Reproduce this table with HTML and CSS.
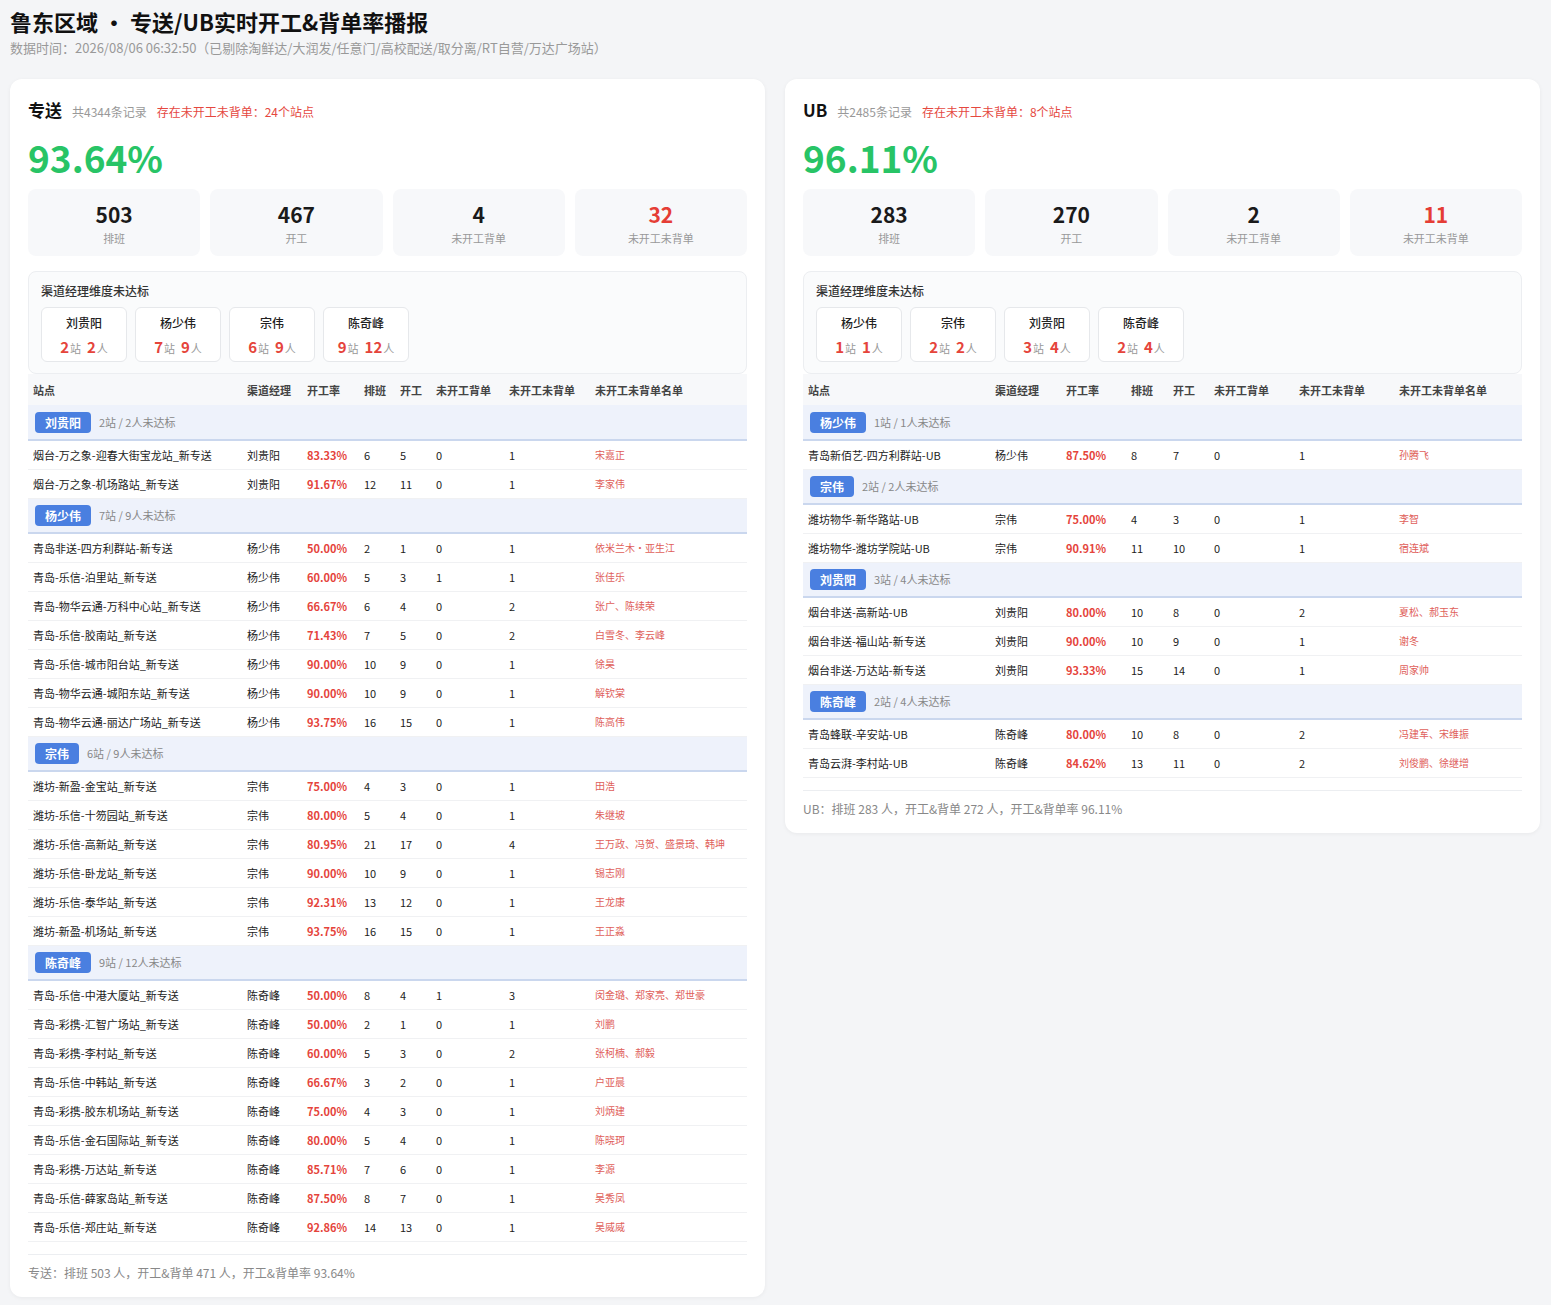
FILE: index.html
```html
<!DOCTYPE html>
<html lang="zh-CN">
<head>
<meta charset="utf-8">
<title>鲁东区域 · 专送/UB实时开工&amp;背单率播报</title>
<link rel="stylesheet" href="styles.css">
</head>
<body>
<header class="page-head">
  <h1 class="page-title">鲁东区域 · 专送/UB实时开工&amp;背单率播报</h1>
  <div class="page-sub">数据时间：2026/08/06 06:32:50（已剔除淘鲜达/大润发/任意门/高校配送/取分离/RT自营/万达广场站）</div>
</header>

<main class="cards">
  <section class="card">
    <div class="card-head">
      <span class="card-name">专送</span>
      <span class="card-count">共4344条记录</span>
      <span class="card-warn">存在未开工未背单：24个站点</span>
    </div>
    <div class="big-rate">93.64%</div>
    <div class="stats">
      <div class="stat"><div class="stat-num">503</div><div class="stat-label">排班</div></div>
      <div class="stat"><div class="stat-num">467</div><div class="stat-label">开工</div></div>
      <div class="stat"><div class="stat-num">4</div><div class="stat-label">未开工背单</div></div>
      <div class="stat"><div class="stat-num red">32</div><div class="stat-label">未开工未背单</div></div>
    </div>
    <div class="mgr-box">
      <div class="mgr-title">渠道经理维度未达标</div>
      <div class="chips">
        <div class="chip"><div class="chip-name">刘贵阳</div><div class="chip-stat"><b>2</b><i>站</i><b>2</b><i>人</i></div></div>
        <div class="chip"><div class="chip-name">杨少伟</div><div class="chip-stat"><b>7</b><i>站</i><b>9</b><i>人</i></div></div>
        <div class="chip"><div class="chip-name">宗伟</div><div class="chip-stat"><b>6</b><i>站</i><b>9</b><i>人</i></div></div>
        <div class="chip"><div class="chip-name">陈奇峰</div><div class="chip-stat"><b>9</b><i>站</i><b>12</b><i>人</i></div></div>
      </div>
    </div>
    <table class="tbl tbl-zs">
      <colgroup><col class="c1"><col class="c2"><col class="c3"><col class="c4"><col class="c5"><col class="c6"><col class="c7"><col></colgroup>
      <thead>
        <tr><th>站点</th><th>渠道经理</th><th>开工率</th><th>排班</th><th>开工</th><th>未开工背单</th><th>未开工未背单</th><th>未开工未背单名单</th></tr>
      </thead>
      <tbody>
        <tr class="grp"><td colspan="8"><span class="badge">刘贵阳</span><span class="grp-info">2站 / 2人未达标</span></td></tr>
        <tr><td>烟台-万之象-迎春大街宝龙站_新专送</td><td>刘贵阳</td><td class="rate">83.33%</td><td>6</td><td>5</td><td>0</td><td>1</td><td class="names">宋嘉正</td></tr>
        <tr><td>烟台-万之象-机场路站_新专送</td><td>刘贵阳</td><td class="rate">91.67%</td><td>12</td><td>11</td><td>0</td><td>1</td><td class="names">李家伟</td></tr>

        <tr class="grp"><td colspan="8"><span class="badge">杨少伟</span><span class="grp-info">7站 / 9人未达标</span></td></tr>
        <tr><td>青岛非送-四方利群站-新专送</td><td>杨少伟</td><td class="rate">50.00%</td><td>2</td><td>1</td><td>0</td><td>1</td><td class="names">依米兰木・亚生江</td></tr>
        <tr><td>青岛-乐信-泊里站_新专送</td><td>杨少伟</td><td class="rate">60.00%</td><td>5</td><td>3</td><td>1</td><td>1</td><td class="names">张佳乐</td></tr>
        <tr><td>青岛-物华云通-万科中心站_新专送</td><td>杨少伟</td><td class="rate">66.67%</td><td>6</td><td>4</td><td>0</td><td>2</td><td class="names">张广、陈续荣</td></tr>
        <tr><td>青岛-乐信-胶南站_新专送</td><td>杨少伟</td><td class="rate">71.43%</td><td>7</td><td>5</td><td>0</td><td>2</td><td class="names">白雪冬、李云峰</td></tr>
        <tr><td>青岛-乐信-城市阳台站_新专送</td><td>杨少伟</td><td class="rate">90.00%</td><td>10</td><td>9</td><td>0</td><td>1</td><td class="names">徐昊</td></tr>
        <tr><td>青岛-物华云通-城阳东站_新专送</td><td>杨少伟</td><td class="rate">90.00%</td><td>10</td><td>9</td><td>0</td><td>1</td><td class="names">解钦棠</td></tr>
        <tr><td>青岛-物华云通-丽达广场站_新专送</td><td>杨少伟</td><td class="rate">93.75%</td><td>16</td><td>15</td><td>0</td><td>1</td><td class="names">陈高伟</td></tr>

        <tr class="grp"><td colspan="8"><span class="badge">宗伟</span><span class="grp-info">6站 / 9人未达标</span></td></tr>
        <tr><td>潍坊-新盈-金宝站_新专送</td><td>宗伟</td><td class="rate">75.00%</td><td>4</td><td>3</td><td>0</td><td>1</td><td class="names">田浩</td></tr>
        <tr><td>潍坊-乐信-十笏园站_新专送</td><td>宗伟</td><td class="rate">80.00%</td><td>5</td><td>4</td><td>0</td><td>1</td><td class="names">朱继坡</td></tr>
        <tr><td>潍坊-乐信-高新站_新专送</td><td>宗伟</td><td class="rate">80.95%</td><td>21</td><td>17</td><td>0</td><td>4</td><td class="names">王万政、冯贺、盛景琦、韩坤</td></tr>
        <tr><td>潍坊-乐信-卧龙站_新专送</td><td>宗伟</td><td class="rate">90.00%</td><td>10</td><td>9</td><td>0</td><td>1</td><td class="names">锡志刚</td></tr>
        <tr><td>潍坊-乐信-泰华站_新专送</td><td>宗伟</td><td class="rate">92.31%</td><td>13</td><td>12</td><td>0</td><td>1</td><td class="names">王龙康</td></tr>
        <tr><td>潍坊-新盈-机场站_新专送</td><td>宗伟</td><td class="rate">93.75%</td><td>16</td><td>15</td><td>0</td><td>1</td><td class="names">王正淼</td></tr>

        <tr class="grp"><td colspan="8"><span class="badge">陈奇峰</span><span class="grp-info">9站 / 12人未达标</span></td></tr>
        <tr><td>青岛-乐信-中港大厦站_新专送</td><td>陈奇峰</td><td class="rate">50.00%</td><td>8</td><td>4</td><td>1</td><td>3</td><td class="names">闵金璐、郑家亮、郑世豪</td></tr>
        <tr><td>青岛-彩携-汇智广场站_新专送</td><td>陈奇峰</td><td class="rate">50.00%</td><td>2</td><td>1</td><td>0</td><td>1</td><td class="names">刘鹏</td></tr>
        <tr><td>青岛-彩携-李村站_新专送</td><td>陈奇峰</td><td class="rate">60.00%</td><td>5</td><td>3</td><td>0</td><td>2</td><td class="names">张柯楠、郝毅</td></tr>
        <tr><td>青岛-乐信-中韩站_新专送</td><td>陈奇峰</td><td class="rate">66.67%</td><td>3</td><td>2</td><td>0</td><td>1</td><td class="names">户亚晨</td></tr>
        <tr><td>青岛-彩携-胶东机场站_新专送</td><td>陈奇峰</td><td class="rate">75.00%</td><td>4</td><td>3</td><td>0</td><td>1</td><td class="names">刘炳建</td></tr>
        <tr><td>青岛-乐信-金石国际站_新专送</td><td>陈奇峰</td><td class="rate">80.00%</td><td>5</td><td>4</td><td>0</td><td>1</td><td class="names">陈晓珂</td></tr>
        <tr><td>青岛-彩携-万达站_新专送</td><td>陈奇峰</td><td class="rate">85.71%</td><td>7</td><td>6</td><td>0</td><td>1</td><td class="names">李源</td></tr>
        <tr><td>青岛-乐信-薛家岛站_新专送</td><td>陈奇峰</td><td class="rate">87.50%</td><td>8</td><td>7</td><td>0</td><td>1</td><td class="names">吴秀凤</td></tr>
        <tr><td>青岛-乐信-郑庄站_新专送</td><td>陈奇峰</td><td class="rate">92.86%</td><td>14</td><td>13</td><td>0</td><td>1</td><td class="names">吴威威</td></tr>
      </tbody>
    </table>
    <div class="card-foot">专送：排班 503 人，开工&amp;背单 471 人，开工&amp;背单率 93.64%</div>
  </section>

  <section class="card">
    <div class="card-head">
      <span class="card-name">UB</span>
      <span class="card-count">共2485条记录</span>
      <span class="card-warn">存在未开工未背单：8个站点</span>
    </div>
    <div class="big-rate">96.11%</div>
    <div class="stats">
      <div class="stat"><div class="stat-num">283</div><div class="stat-label">排班</div></div>
      <div class="stat"><div class="stat-num">270</div><div class="stat-label">开工</div></div>
      <div class="stat"><div class="stat-num">2</div><div class="stat-label">未开工背单</div></div>
      <div class="stat"><div class="stat-num red">11</div><div class="stat-label">未开工未背单</div></div>
    </div>
    <div class="mgr-box">
      <div class="mgr-title">渠道经理维度未达标</div>
      <div class="chips">
        <div class="chip"><div class="chip-name">杨少伟</div><div class="chip-stat"><b>1</b><i>站</i><b>1</b><i>人</i></div></div>
        <div class="chip"><div class="chip-name">宗伟</div><div class="chip-stat"><b>2</b><i>站</i><b>2</b><i>人</i></div></div>
        <div class="chip"><div class="chip-name">刘贵阳</div><div class="chip-stat"><b>3</b><i>站</i><b>4</b><i>人</i></div></div>
        <div class="chip"><div class="chip-name">陈奇峰</div><div class="chip-stat"><b>2</b><i>站</i><b>4</b><i>人</i></div></div>
      </div>
    </div>
    <table class="tbl tbl-ub">
      <colgroup><col class="c1"><col class="c2"><col class="c3"><col class="c4"><col class="c5"><col class="c6"><col class="c7"><col></colgroup>
      <thead>
        <tr><th>站点</th><th>渠道经理</th><th>开工率</th><th>排班</th><th>开工</th><th>未开工背单</th><th>未开工未背单</th><th>未开工未背单名单</th></tr>
      </thead>
      <tbody>
        <tr class="grp"><td colspan="8"><span class="badge">杨少伟</span><span class="grp-info">1站 / 1人未达标</span></td></tr>
        <tr><td>青岛新佰艺-四方利群站-UB</td><td>杨少伟</td><td class="rate">87.50%</td><td>8</td><td>7</td><td>0</td><td>1</td><td class="names">孙腾飞</td></tr>

        <tr class="grp"><td colspan="8"><span class="badge">宗伟</span><span class="grp-info">2站 / 2人未达标</span></td></tr>
        <tr><td>潍坊物华-新华路站-UB</td><td>宗伟</td><td class="rate">75.00%</td><td>4</td><td>3</td><td>0</td><td>1</td><td class="names">李智</td></tr>
        <tr><td>潍坊物华-潍坊学院站-UB</td><td>宗伟</td><td class="rate">90.91%</td><td>11</td><td>10</td><td>0</td><td>1</td><td class="names">宿连斌</td></tr>

        <tr class="grp"><td colspan="8"><span class="badge">刘贵阳</span><span class="grp-info">3站 / 4人未达标</span></td></tr>
        <tr><td>烟台非送-高新站-UB</td><td>刘贵阳</td><td class="rate">80.00%</td><td>10</td><td>8</td><td>0</td><td>2</td><td class="names">夏松、郝玉东</td></tr>
        <tr><td>烟台非送-福山站-新专送</td><td>刘贵阳</td><td class="rate">90.00%</td><td>10</td><td>9</td><td>0</td><td>1</td><td class="names">谢冬</td></tr>
        <tr><td>烟台非送-万达站-新专送</td><td>刘贵阳</td><td class="rate">93.33%</td><td>15</td><td>14</td><td>0</td><td>1</td><td class="names">周家帅</td></tr>

        <tr class="grp"><td colspan="8"><span class="badge">陈奇峰</span><span class="grp-info">2站 / 4人未达标</span></td></tr>
        <tr><td>青岛蜂联-辛安站-UB</td><td>陈奇峰</td><td class="rate">80.00%</td><td>10</td><td>8</td><td>0</td><td>2</td><td class="names">冯建军、宋维振</td></tr>
        <tr><td>青岛云湃-李村站-UB</td><td>陈奇峰</td><td class="rate">84.62%</td><td>13</td><td>11</td><td>0</td><td>2</td><td class="names">刘俊鹏、徐继增</td></tr>
      </tbody>
    </table>
    <div class="card-foot">UB：排班 283 人，开工&amp;背单 272 人，开工&amp;背单率 96.11%</div>
  </section>
</main>
</body>
</html>
```

FILE: styles.css
```css
* { box-sizing: border-box; }

body {
  margin: 0;
  padding: 6px 11px 10px 10px;
  background: #f4f5f7;
  font-family: "Noto Sans CJK SC", "Noto Sans", sans-serif;
  color: #222;
}

.page-title {
  margin: 0;
  font-size: 22px;
  line-height: 30px;
  font-weight: 700;
  color: #111;
}

.page-sub {
  margin-top: 3px;
  font-size: 13px;
  line-height: 18px;
  color: #999;
}

.cards {
  display: grid;
  grid-template-columns: 1fr 1fr;
  gap: 20px;
  align-items: start;
  margin-top: 22px;
}

.card {
  background: #fff;
  border-radius: 12px;
  padding: 18px 18px 15px;
  box-shadow: 0 1px 4px rgba(0, 0, 0, 0.05);
}

.card-head {
  display: flex;
  align-items: baseline;
  gap: 10px;
  line-height: 26px;
}

.card-name {
  font-size: 17px;
  font-weight: 700;
  color: #111;
}

.card-count {
  font-size: 12px;
  color: #999;
}

.card-warn {
  font-size: 12px;
  color: #e5483f;
}

.big-rate {
  margin-top: 9px;
  font-size: 37px;
  line-height: 46px;
  font-weight: 700;
  color: #28c466;
}

.stats {
  display: grid;
  grid-template-columns: repeat(4, 1fr);
  gap: 10px;
  margin-top: 9px;
}

.stat {
  background: #f7f8fa;
  border-radius: 8px;
  padding: 11px 0 10px;
  text-align: center;
}

.stat-num {
  font-size: 21px;
  line-height: 28px;
  font-weight: 700;
  color: #1a1a1a;
}

.stat-num.red { color: #e53d35; }

.stat-label {
  margin-top: 2px;
  font-size: 11px;
  line-height: 16px;
  color: #999;
}

.mgr-box {
  margin-top: 15px;
  border: 1px solid #eceef1;
  background: #fafbfc;
  border-radius: 8px;
  padding: 10px 12px 11px;
}

.mgr-title {
  font-size: 12px;
  line-height: 18px;
  color: #333;
  font-weight: 500;
}

.chips {
  display: flex;
  gap: 8px;
  margin-top: 7px;
}

.chip {
  min-width: 86px;
  background: #fff;
  border: 1px solid #e6e8eb;
  border-radius: 6px;
  padding: 6px 12px 2px;
  text-align: center;
}

.chip-name {
  font-size: 12px;
  line-height: 18px;
  color: #222;
  font-weight: 500;
}

.chip-stat {
  margin-top: 3px;
  line-height: 22px;
  white-space: nowrap;
}

.chip-stat b {
  font-size: 15px;
  font-weight: 700;
  color: #e5443b;
}

.chip-stat i {
  font-style: normal;
  font-size: 11px;
  color: #999;
  margin-left: 1px;
}

.chip-stat i:nth-of-type(1) { margin-right: 6px; }

.tbl {
  width: 100%;
  margin-top: 0;
  border-collapse: collapse;
  table-layout: fixed;
  font-size: 11px;
}

.tbl-zs .c1 { width: 214px; }
.tbl-zs .c2 { width: 60px; }
.tbl-zs .c3 { width: 57px; }
.tbl-zs .c4 { width: 36px; }
.tbl-zs .c5 { width: 36px; }
.tbl-zs .c6 { width: 73px; }
.tbl-zs .c7 { width: 86px; }

.tbl-ub .c1 { width: 187px; }
.tbl-ub .c2 { width: 71px; }
.tbl-ub .c3 { width: 65px; }
.tbl-ub .c4 { width: 42px; }
.tbl-ub .c5 { width: 41px; }
.tbl-ub .c6 { width: 85px; }
.tbl-ub .c7 { width: 100px; }

.tbl th {
  height: 31px;
  padding: 0 5px;
  background: #f7f8fa;
  text-align: left;
  font-weight: 700;
  color: #444;
  white-space: nowrap;
}

.tbl td {
  height: 29px;
  padding: 0 5px;
  border-bottom: 1px solid #f0f1f3;
  white-space: nowrap;
  color: #222;
}

.tbl td.rate {
  color: #e5443b;
  font-weight: 700;
}

.tbl td.names {
  font-size: 10px;
  color: #e0605a;
}

.tbl tr.grp td {
  height: 35px;
  background: #eef2fb;
  border-bottom: 2px solid #cad7ee;
  padding: 0 7px;
}

.badge {
  display: inline-block;
  vertical-align: middle;
  background: #4a7fe0;
  color: #fff;
  font-size: 12px;
  font-weight: 700;
  line-height: 21px;
  padding: 0 10px;
  border-radius: 4px;
}

.grp-info {
  display: inline-block;
  vertical-align: middle;
  margin-left: 8px;
  font-size: 11px;
  color: #888;
}

.card-foot {
  margin-top: 12px;
  border-top: 1px solid #eceef1;
  padding-top: 9px;
  font-size: 12px;
  line-height: 18px;
  color: #888;
}
```
